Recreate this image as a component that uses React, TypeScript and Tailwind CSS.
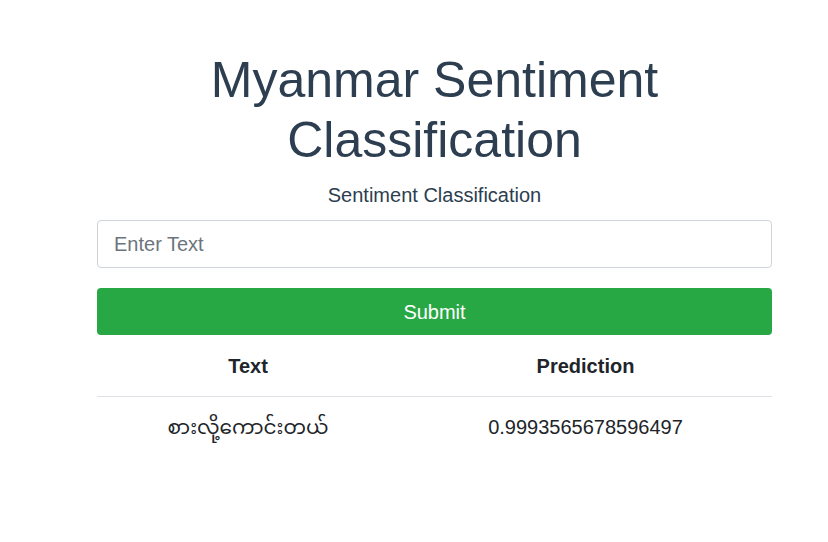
export default function App() {
  const rows = [{ text: "စားလို့ကောင်းတယ်", prediction: "0.9993565678596497" }];

  return (
    <div className="min-h-screen bg-white font-['Liberation_Sans','Noto_Sans_Myanmar','Padauk',Arial,sans-serif]">
      <div className="ml-[97px] w-[675px] pt-[50px]">
        <h1 className="text-center text-[50px] leading-[60px] text-[#2c3e50]">
          Myanmar Sentiment
          <br />
          Classification
        </h1>
        <p className="mt-[10px] text-center text-[20px] leading-[30px] text-[#2c3e50]">
          Sentiment Classification
        </p>

        <input
          type="text"
          placeholder="Enter Text"
          className="mt-[10px] block h-[48px] w-full rounded-[4px] border border-[#ced4da] px-4 text-[20px] text-[#495057] placeholder:text-[#6c757d] outline-none"
        />

        <button className="mt-[20px] block h-[47px] w-full rounded-[4px] bg-[#28a745] text-[20px] text-white">
          Submit
        </button>

        <table className="mt-px w-full border-collapse text-[20px] leading-[30px] text-[#212529]">
          <thead>
            <tr className="border-b border-[#dee2e6]">
              <th className="w-[302px] py-[15px] text-center font-bold">Text</th>
              <th className="py-[15px] text-center font-bold">Prediction</th>
            </tr>
          </thead>
          <tbody>
            {rows.map((r) => (
              <tr key={r.prediction}>
                <td className="py-[15px] text-center">{r.text}</td>
                <td className="py-[15px] text-center">{r.prediction}</td>
              </tr>
            ))}
          </tbody>
        </table>
      </div>
    </div>
  );
}
